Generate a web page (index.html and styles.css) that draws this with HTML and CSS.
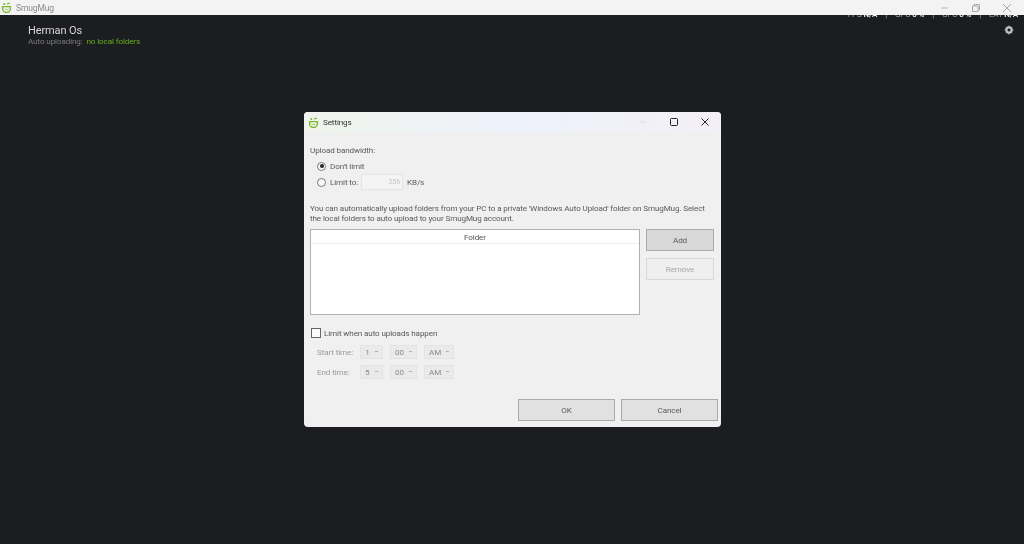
FILE: index.html
```html
<!DOCTYPE html>
<html lang="en">
<head>
  <meta charset="UTF-8" />
  <title>SmugMug</title>
  <link rel="stylesheet" href="styles.css">
</head>
<body>
  <svg width="0" height="0" class="defs">
    <symbol id="logo" viewBox="0 0 12 12">
      <path d="M1.700 5h8.600v2.200a4.300 4.300 0 0 1-8.600 0z" fill="none" stroke="#7ab82e" stroke-width="1.500"/>
      <path d="M3.800 7.400c.7 1.100 3.700 1.100 4.400 0" fill="none" stroke="#7ab82e" stroke-width=".8"/>
      <circle cx="3.600" cy="2.200" r="1.100" fill="#7ab82e"/>
      <path d="M6.800 2.600c.8-1.300 2.200-1.400 3-.8" fill="none" stroke="#7ab82e" stroke-width="1.200"/>
    </symbol>
  </svg>

  <header class="app-title">
    <svg class="app-logo"><use href="#logo"/></svg>
    <span class="app-name">SmugMug</span>
    <div class="win-buttons">
      <svg width="10" height="10" viewBox="0 0 10 10"><path d="M1 5h7" stroke="#bbb" fill="none"/></svg>
      <svg width="10" height="10" viewBox="0 0 10 10"><path d="M1.500 3h5.500v5.500h-5.500zM3 3V1.500h5.500V7H7" stroke="#aaa" fill="none"/></svg>
      <svg width="10" height="10" viewBox="0 0 10 10"><path d="M1 1l8 8M9 1l-8 8" stroke="#aaa" fill="none"/></svg>
    </div>
  </header>

  <main class="app-body">
    <div class="stats">FPS <b>N/A</b><i>|</i>GPU <b>0 %</b><i>|</i>CPU <b>0 %</b><i>|</i>LAT <b>N/A</b></div>
    <div class="account">
      <div class="account-name">Herman Os</div>
      <div class="account-status">Auto uploading: <span class="status-value">no local folders</span></div>
    </div>
    <svg class="gear" width="10" height="10" viewBox="0 0 10 10">
      <circle cx="5" cy="5" r="2.700" fill="none" stroke="#c0c0c0" stroke-width="2"/>
      <path d="M5 .5v9M.5 5h9M1.800 1.800l6.400 6.400M8.200 1.800l-6.400 6.400" stroke="#c0c0c0" stroke-width="1"/>
      <circle cx="5" cy="5" r="1.300" fill="#1c1d20"/>
    </svg>
  </main>

  <section class="dialog">
    <div class="dialog-title">
      <svg class="dialog-logo"><use href="#logo"/></svg>
      <span class="dialog-name">Settings</span>
      <div class="dialog-buttons">
        <svg width="10" height="10" viewBox="0 0 10 10"><path d="M1 5h7" stroke="#ddd" fill="none"/></svg>
        <svg width="10" height="10" viewBox="0 0 10 10"><rect x="1.500" y="1.500" width="7" height="7" rx="1" stroke="#222" fill="none"/></svg>
        <svg width="10" height="10" viewBox="0 0 10 10"><path d="M1.500 1.500l7 7M8.500 1.500l-7 7" stroke="#222" fill="none"/></svg>
      </div>
    </div>

    <div class="dialog-content">
      <div class="label">Upload bandwidth:</div>
      <div class="radio-group">
        <div class="row"><span class="radio checked"></span><span>Don't limit</span></div>
        <div class="row">
          <span class="radio"></span><span class="limit-label">Limit to:</span>
          <span class="rate-input">256</span><span>KB/s</span>
        </div>
      </div>

      <p class="note">You can automatically upload folders from your PC to a private 'Windows Auto Upload' folder on SmugMug. Select<br>the local folders to auto upload to your SmugMug account.</p>

      <div class="folders">
        <div class="folder-list">
          <div class="folder-head">Folder</div>
        </div>
        <div class="folder-actions">
          <div class="btn btn-active">Add</div>
          <div class="btn btn-disabled">Remove</div>
        </div>
      </div>

      <div class="row limit-row"><span class="checkbox"></span><span>Limit when auto uploads happen</span></div>
      <div class="time-row first">
        <span class="time-label">Start time:</span>
        <span class="select sel-h">1</span><span class="select sel-m">00</span><span class="select sel-a">AM</span>
      </div>
      <div class="time-row">
        <span class="time-label">End time:</span>
        <span class="select sel-h">5</span><span class="select sel-m">00</span><span class="select sel-a">AM</span>
      </div>

      <div class="dialog-footer">
        <div class="btn btn-wide">OK</div>
        <div class="btn btn-wide">Cancel</div>
      </div>
    </div>
  </section>
</body>
</html>
```

FILE: styles.css
```css
html, body {
  margin: 0;
  height: 100%;
  overflow: hidden;
}
body {
  display: flex;
  flex-direction: column;
  background: #1c1d20;
  font-family: Roboto, "Noto Sans", sans-serif;
  font-size: 8.100px;
  letter-spacing: -.12px;
  color: #5a5a5a;
  filter: blur(.3px);
}
.defs {
  position: absolute;
}

/* app window */
.app-title {
  height: 15px;
  background: #f3f3f3;
  display: flex;
  align-items: center;
  position: relative;
  z-index: 1;
  flex: none;
}
.app-logo {
  width: 11px;
  height: 11px;
  margin-left: 1px;
}
.app-name {
  margin-left: 4px;
  color: #8a8a8a;
  font-size: 8.500px;
}
.win-buttons {
  margin-left: auto;
  display: flex;
  gap: 21px;
  padding-right: 12px;
}
.app-body {
  flex: 1;
  position: relative;
  padding: 10px 0 0 28px;
}
.stats {
  position: absolute;
  top: -6px;
  right: 6px;
  font-size: 8px;
  line-height: 12px;
  color: #aaa;
  white-space: nowrap;
}
.stats b {
  color: #eee;
  font-weight: 600;
}
.stats i {
  margin: 0 8px;
  font-style: normal;
}
.account-name {
  font-size: 11px;
  line-height: 11px;
  color: #d8d8d8;
}
.account-status {
  line-height: 11px;
  color: #7b7b7b;
}
.status-value {
  margin-left: 2px;
  color: #62b01a;
}
.gear {
  position: absolute;
  top: 10px;
  right: 10px;
}

/* settings dialog */
.dialog {
  position: absolute;
  left: 304px;
  top: 112px;
  width: 417px;
  height: 315px;
  background: #f0f0f0;
  border-radius: 4px;
  overflow: hidden;
}
.dialog-title {
  height: 20px;
  display: flex;
  align-items: center;
  background: linear-gradient(90deg, #f0f4ec, #eef2fb 50%, #f3eff6);
}
.dialog-logo {
  width: 11px;
  height: 11px;
  margin-left: 4px;
}
.dialog-name {
  margin-left: 4px;
  color: #333;
}
.dialog-buttons {
  margin-left: auto;
  display: flex;
  gap: 21px;
  padding-right: 11px;
}
.dialog-content {
  padding: 12px 3px 0 6px;
}
.label {
  line-height: 12px;
}
.radio-group {
  margin: 2px 0 0 7px;
}
.row {
  display: flex;
  align-items: center;
  gap: 4px;
  height: 16px;
}
.radio {
  width: 7px;
  height: 7px;
  border: 1px solid #777;
  border-radius: 50%;
  background: #fafafa;
  position: relative;
}
.radio.checked::after {
  content: "";
  position: absolute;
  inset: 1.500px;
  border-radius: 50%;
  background: #222;
}
.limit-label {
  width: 27px;
  white-space: nowrap;
}
.rate-input {
  width: 38px;
  height: 14px;
  padding-right: 2px;
  border: 1px solid #e4e4e4;
  background: #f4f4f4;
  color: #c4c4c4;
  text-align: right;
  font-size: 7px;
  line-height: 14px;
}
.note {
  margin: 13px 0 0;
  line-height: 10px;
  white-space: nowrap;
}
.folders {
  display: flex;
  margin-top: 6px;
  gap: 6px;
}
.folder-list {
  width: 328px;
  height: 84px;
  border: 1px solid #b0b0b0;
  background: #fff;
}
.folder-head {
  height: 13px;
  border-bottom: 1px solid #ececec;
  text-align: center;
  line-height: 15px;
  color: #555;
}
.folder-actions {
  display: flex;
  flex-direction: column;
  gap: 7px;
}
.btn {
  box-sizing: border-box;
  text-align: center;
  border: 1px solid #aaa;
  background: #e1e1e1;
  color: #5a5a5a;
}
.btn-active {
  width: 68px;
  height: 22px;
  line-height: 20px;
  background: #d8d8d8;
}
.btn-disabled {
  width: 68px;
  height: 22px;
  line-height: 20px;
  background: #efefef;
  border-color: #d8d8d8;
  color: #a8a8a8;
}
.limit-row {
  margin: 10px 0 0 1px;
  gap: 3px;
}
.checkbox {
  width: 8px;
  height: 8px;
  border: 1px solid #666;
  background: #fafafa;
}
.time-row {
  display: flex;
  align-items: center;
  margin: 4px 0 0 7px;
  height: 16px;
  color: #999;
}
.time-row.first {
  margin-top: 3px;
}
.time-label {
  width: 43px;
}
.select {
  box-sizing: border-box;
  height: 14px;
  line-height: 13px;
  padding-left: 4px;
  margin-right: 7px;
  border: 1px solid #e4e4e4;
  background: #eaeaea;
  color: #8a8a8a;
  position: relative;
}
.select::after {
  content: "";
  position: absolute;
  right: 4px;
  top: 5px;
  width: 3px;
  height: 1px;
  background: #b0b0b0;
}
.sel-h {
  width: 23px;
}
.sel-m {
  width: 27px;
}
.sel-a {
  width: 30px;
}
.dialog-footer {
  display: flex;
  justify-content: flex-end;
  gap: 6px;
  margin-top: 19px;
}
.btn-wide {
  width: 97px;
  height: 22px;
  line-height: 20px;
}
```
